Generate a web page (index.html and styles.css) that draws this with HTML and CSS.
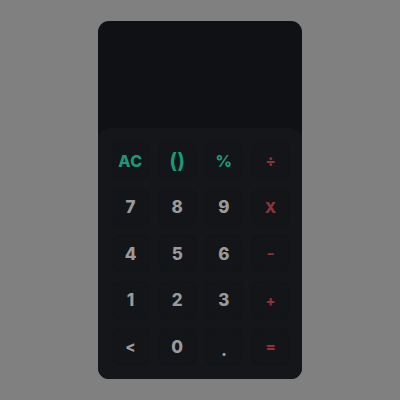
FILE: index.html
```html
<!DOCTYPE html>
<html>
<head>
<meta charset="utf-8">
<link rel="stylesheet" href="styles.css">
</head>
<body>
<div class="calc">
  <div class="display"></div>
  <div class="pad">
    <div class="key fn">AC</div>
    <div class="key fn paren">()</div>
    <div class="key fn">%</div>
    <div class="key op div">÷</div>
    <div class="key">7</div>
    <div class="key">8</div>
    <div class="key">9</div>
    <div class="key op x">X</div>
    <div class="key">4</div>
    <div class="key">5</div>
    <div class="key">6</div>
    <div class="key op minus">−</div>
    <div class="key">1</div>
    <div class="key">2</div>
    <div class="key">3</div>
    <div class="key op plus">+</div>
    <div class="key back">&lt;</div>
    <div class="key">0</div>
    <div class="key dot">.</div>
    <div class="key op eq">=</div>
  </div>
</div>
</body>
</html>
```
FILE: styles.css
```css
html, body {
  margin: 0;
  padding: 0;
}
body {
  width: 400px;
  height: 400px;
  background: #808080;
  display: flex;
  align-items: center;
  justify-content: center;
  font-family: "Inter", "DejaVu Sans", sans-serif;
}
.calc {
  width: 204px;
  height: 358px;
  background: #101115;
  border-radius: 11px;
  display: flex;
  flex-direction: column;
  overflow: hidden;
}
.display {
  height: 107px;
}
.pad {
  flex: 1;
  background: #15161a;
  border-radius: 12px 12px 0 0;
  padding: 15px 14px 14px 15px;
  display: grid;
  grid-template-columns: repeat(4, 35px);
  grid-template-rows: repeat(5, 35px);
  column-gap: 11.7px;
  row-gap: 11.6px;
}
.key {
  background: #141519;
  border-radius: 6px;
  box-shadow: 0 0 2px rgba(0,0,0,0.25);
  display: flex;
  align-items: center;
  justify-content: center;
  color: #9a9a9a;
  font-size: 17px;
  font-weight: 800;
}
.fn {
  color: #1e9777;
  font-size: 16px;
  letter-spacing: 0.5px;
}
.paren {
  font-size: 21px;
  font-weight: 700;
  letter-spacing: 0;
}
.op {
  color: #8a3636;
  font-size: 14px;
}
.div { font-size: 15px; }
.x { font-size: 15px; }
.minus { font-size: 12px; }
.plus { font-size: 14px; }
.eq { font-size: 15px; }
.back { font-size: 15px; }
.dot { padding-top: 6px; font-size: 17px; }
```
